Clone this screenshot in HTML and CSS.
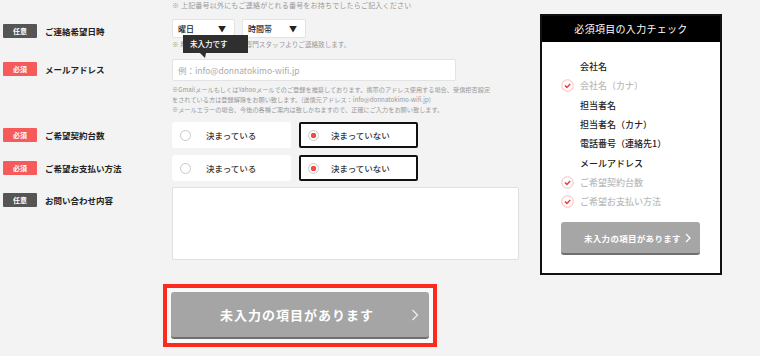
FILE: index.html
```html
<!DOCTYPE html>
<html lang="ja">
<head>
<meta charset="utf-8">
<link rel="stylesheet" href="styles.css">
</head>
<body>
<div class="page">
  <div class="form">
    <div class="topnote">※ 上記番号以外にもご連絡がとれる番号をお持ちでしたらご記入ください</div>

    <div class="row r1">
      <div class="head"><span class="badge opt">任意</span><span class="label">ご連絡希望日時</span></div>
      <div class="content rel">
        <div class="selects">
          <div class="select s1"><span>曜日</span><span class="arr">▼</span></div>
          <div class="select s2"><span>時間帯</span><span class="arr">▼</span></div>
        </div>
        <div class="note">※ 希望の日時については専門スタッフよりご連絡致します。</div>
        <div class="tooltip">未入力です</div>
      </div>
    </div>

    <div class="row r2">
      <div class="head"><span class="badge req">必須</span><span class="label">メールアドレス</span></div>
      <div class="content">
        <div class="input">例：info@donnatokimo-wifi.jp</div>
        <div class="notes">
          <div>※GmailメールもしくはYahooメールでのご登録を推奨しております。携帯のアドレス使用する場合、受信拒否設定</div>
          <div>をされている方は登録解除をお願い致します。(送信元アドレス：info@donnatokimo-wifi.jp)</div>
          <div>※メールエラーの場合、今後の各種ご案内は致しかねますので、正確にご入力をお願い致します。</div>
        </div>
      </div>
    </div>

    <div class="row r3">
      <div class="head"><span class="badge req">必須</span><span class="label">ご希望契約台数</span></div>
      <div class="content radios">
        <div class="radio"><span class="dot"></span><span>決まっている</span></div>
        <div class="radio on"><span class="dot"></span><span>決まっていない</span></div>
      </div>
    </div>

    <div class="row r4">
      <div class="head"><span class="badge req">必須</span><span class="label">ご希望お支払い方法</span></div>
      <div class="content radios">
        <div class="radio"><span class="dot"></span><span>決まっている</span></div>
        <div class="radio on"><span class="dot"></span><span>決まっていない</span></div>
      </div>
    </div>

    <div class="row r5">
      <div class="head"><span class="badge opt">任意</span><span class="label">お問い合わせ内容</span></div>
      <div class="content"><div class="textarea"></div></div>
    </div>

    <div class="bigwrap">
      <div class="bigbtn"><span class="btxt">未入力の項目があります</span>
        <svg class="chev" width="8" height="12" viewBox="0 0 8 12"><polyline points="1.5,1 6.5,6 1.5,11" fill="none" stroke="#eee" stroke-width="1.3"/></svg>
      </div>
    </div>
  </div>

  <div class="side">
    <div class="side-head">必須項目の入力チェック</div>
    <ul class="checks">
      <li><span class="ic"></span>会社名</li>
      <li class="done"><span class="ic"><svg width="13" height="13" viewBox="0 0 13 13"><circle cx="6.5" cy="6.5" r="5.7" fill="#fff" stroke="#f8b9b9" stroke-width="1"/><polyline points="3.9,6.5 5.9,8.4 9.2,4.9" fill="none" stroke="#ee3d3d" stroke-width="1.5"/></svg></span>会社名（カナ）</li>
      <li><span class="ic"></span>担当者名</li>
      <li><span class="ic"></span>担当者名（カナ）</li>
      <li><span class="ic"></span>電話番号（連絡先1）</li>
      <li><span class="ic"></span>メールアドレス</li>
      <li class="done"><span class="ic"><svg width="13" height="13" viewBox="0 0 13 13"><circle cx="6.5" cy="6.5" r="5.7" fill="#fff" stroke="#f8b9b9" stroke-width="1"/><polyline points="3.9,6.5 5.9,8.4 9.2,4.9" fill="none" stroke="#ee3d3d" stroke-width="1.5"/></svg></span>ご希望契約台数</li>
      <li class="done"><span class="ic"><svg width="13" height="13" viewBox="0 0 13 13"><circle cx="6.5" cy="6.5" r="5.7" fill="#fff" stroke="#f8b9b9" stroke-width="1"/><polyline points="3.9,6.5 5.9,8.4 9.2,4.9" fill="none" stroke="#ee3d3d" stroke-width="1.5"/></svg></span>ご希望お支払い方法</li>
    </ul>
    <div class="sidebtn"><span class="stxt">未入力の項目があります</span>
      <svg class="schev" width="6" height="10" viewBox="0 0 6 10"><polyline points="1,1 5,5 1,9" fill="none" stroke="#fff" stroke-width="1.3"/></svg>
    </div>
  </div>
</div>
</body>
</html>
```

FILE: styles.css
```css
* { box-sizing: border-box; }
html, body { margin: 0; padding: 0; }
body {
  background: #f3f3f3;
  font-family: "Noto Sans CJK JP", "Noto Sans", sans-serif;
  color: #222;
  width: 760px;
  height: 356px;
  overflow: hidden;
}
.page { display: flex; width: 760px; height: 356px; }
.form { width: 540px; flex: none; }

.topnote {
  height: 11px;
  padding-left: 172px;
  font-size: 7px;
  line-height: 11px;
  color: #999;
  white-space: nowrap;
  letter-spacing: 0.2px;
}

.row { display: grid; grid-template-columns: 172px 1fr; }
.head { display: flex; align-items: center; height: 14px; padding-left: 3px; }
.badge {
  width: 34px; height: 14px;
  display: flex; align-items: center; justify-content: center;
  font-size: 7px; font-weight: 700; color: #fff;
  border-radius: 1px;
}
.badge.opt { background: #555; }
.badge.req { background: #f65a5a; }
.label { margin-left: 8px; font-size: 8.5px; font-weight: 700; color: #222; white-space: nowrap; }

.content { width: 348px; }
.rel { position: relative; }

.r1 { margin-top: 8px; }
.r1 .head { margin-top: 5px; }
.selects { display: flex; gap: 7px; }
.select {
  height: 19px; background: #fff; border: 1px solid #e3e3e3; border-radius: 2px;
  display: flex; align-items: center; justify-content: space-between;
  padding: 0 8px 0 5px; font-size: 8px; font-weight: 500; color: #222;
}
.s1 { width: 63px; }
.s2 { width: 64px; }
.arr { font-size: 8px; }
.note { margin-top: 1px; font-size: 6.6px; line-height: 10px; color: #999; white-space: nowrap; }
.tooltip {
  position: absolute; left: 11px; top: 16px;
  width: 65px; height: 18px;
  background: #2f2f2f; color: #fff;
  font-size: 7.5px; font-weight: 500;
  padding-left: 7px; line-height: 18px;
}
.tooltip::after {
  content: ""; position: absolute; left: 17px; top: 18px;
  border-top: 5px solid #2f2f2f; border-left: 5px solid transparent; border-right: 1px solid transparent;
}

.r2 { margin-top: 10px; }
.r2 .head { margin-top: 3px; }
.input {
  width: 284px; height: 22px; background: #fff; border: 1px solid #e3e3e3; border-radius: 2px;
  font-size: 8.5px; color: #aaa; padding-left: 5px; line-height: 20px; white-space: nowrap;
}
.notes { margin-top: 4px; font-size: 6.2px; line-height: 10px; color: #999; white-space: nowrap; }

.r3 { margin-top: 7px; }
.r4 { margin-top: 7px; }
.r3 .head, .r4 .head { margin-top: 6px; }
.radios { display: flex; gap: 8px; }
.radio {
  width: 119px; height: 26px; background: #fff; border-radius: 3px;
  display: flex; align-items: center; gap: 15px; padding-left: 8px;
  font-size: 8.5px; font-weight: 500; color: #333; white-space: nowrap;
}
.radio .dot {
  width: 11px; height: 11px; border-radius: 50%; border: 1px solid #c8c8c8; background: #fff; flex: none;
}
.radio.on { border: 2px solid #111; padding-left: 7px; gap: 12px; border-radius: 2px; }
.radio.on .dot { background: radial-gradient(circle, #f54848 0 2.5px, #fafafa 3px); border-color: #ccc; }

.r5 { margin-top: 6px; }
.r5 .head { margin-top: 6px; }
.textarea { width: 347px; height: 73px; background: #fff; border: 1px solid #e0e0e0; border-radius: 2px; }

.bigwrap {
  margin-top: 24px; margin-left: 163px;
  width: 274px; height: 63px;
  border: 4px solid #ff2a1e; background: #f9f9f9;
  padding: 4px;
}
.bigbtn {
  height: 47px; background: #a5a5a5; border-radius: 3px;
  border-bottom: 2px solid #6f6f6f;
  display: flex; align-items: center; position: relative;
}
.btxt {
  flex: 1; text-align: center; padding-right: 6px;
  font-size: 13px; font-weight: 700; color: #fff; letter-spacing: 1px;
}
.chev { position: absolute; right: 10px; top: 17px; }

.side {
  width: 182px; height: 261px; margin-top: 14px; flex: none;
  border: 2px solid #111; background: #fff;
}
.side-head {
  height: 26px; background: #000; color: #fff;
  font-size: 10px; font-weight: 400; text-align: center; line-height: 26px; letter-spacing: 0.3px;
}
.checks { list-style: none; margin: 0; padding: 15px 0 0 19px; }
.checks li {
  height: 19.3px; display: flex; align-items: center;
  font-size: 9px; font-weight: 500; color: #222; white-space: nowrap;
}
.checks li.done { color: #bbb; }
.ic { width: 13px; height: 13px; margin-right: 6px; display: inline-flex; flex: none; }
.ic svg { display: block; }
.sidebtn {
  margin: 11px 0 0 19px; width: 139px; height: 33px;
  background: #a6a6a6; border-radius: 3px; border-bottom: 2px solid #6f6f6f;
  display: flex; align-items: center; position: relative;
}
.stxt { margin-left: 23px; font-size: 8.5px; font-weight: 700; color: #fff; letter-spacing: 0.3px; }
.schev { position: absolute; right: 9px; top: 11px; }
```
